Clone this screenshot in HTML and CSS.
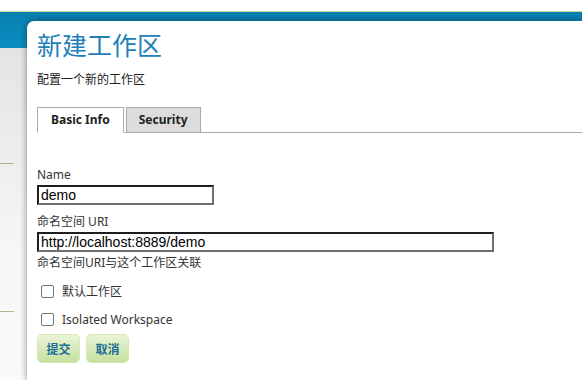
FILE: index.html
```html
<!DOCTYPE html>
<html lang="zh">
<head>
    <meta charset="UTF-8">
    <title>新建工作区</title>
    <link rel="stylesheet" href="styles.css">
</head>
<body>
    <div class="topbar"></div>
    <div class="header"></div>
    <div class="layout">
        <div class="sidebar">
            <div class="side-item"></div>
            <div class="side-item"></div>
        </div>
        <div class="page">
            <h1>新建工作区</h1>
            <p class="subtitle">配置一个新的工作区</p>

            <div class="tabs">
                <div class="tab active">Basic Info</div>
                <div class="tab">Security</div>
            </div>

            <div class="form">
                <div class="field">
                    <label for="name">Name</label>
                    <input type="text" id="name" class="short" value="demo">
                </div>
                <div class="field">
                    <label for="uri">命名空间 URI</label>
                    <input type="text" id="uri" class="long" value="http://localhost:8889/demo">
                    <div class="help">命名空间URI与这个工作区关联</div>
                </div>
                <div class="check">
                    <input type="checkbox" id="default">
                    <label for="default">默认工作区</label>
                </div>
                <div class="check">
                    <input type="checkbox" id="isolated">
                    <label for="isolated">Isolated Workspace</label>
                </div>
                <div class="buttons">
                    <button>提交</button>
                    <button>取消</button>
                </div>
            </div>
        </div>
    </div>
</body>
</html>
```

FILE: styles.css
```css
* {
    margin: 0;
    padding: 0;
    box-sizing: border-box;
}

body {
    height: 100vh;
    display: flex;
    flex-direction: column;
    font-family: 'Noto Sans', 'Noto Sans CJK SC', sans-serif;
    font-size: 12px;
    color: #333;
    background: #fff;
    overflow: hidden;
}

.topbar {
    height: 12px;
    flex-shrink: 0;
    background: #fff;
    border-bottom: 1px solid #c2dc94;
}

.header {
    height: 36px;
    flex-shrink: 0;
    background: linear-gradient(#0a7fb0, #0a8fc2);
}

.layout {
    display: flex;
    flex: 1;
    min-height: 0;
}

.sidebar {
    width: 27px;
    flex-shrink: 0;
    background: linear-gradient(#e4e4e4, #f6f6f6 60%, #fafafa);
    padding-top: 115px;
}

.side-item {
    width: 14px;
    height: 148px;
    border-top: 1px solid #abb592;
}

.side-item:last-child {
    height: 20px;
}

.page {
    flex: 1;
    margin-top: -27px;
    background: #fff;
    border-top-left-radius: 7px;
    box-shadow: 0 0 7px rgba(0, 0, 0, 0.45);
    padding: 8px 0 0 10px;
}

h1 {
    font-size: 25px;
    font-weight: normal;
    line-height: 32px;
    color: #2280b8;
}

.subtitle {
    margin-top: 11px;
    line-height: 16px;
    color: #222;
}

.tabs {
    display: flex;
    gap: 2px;
    margin-top: 19px;
    border-bottom: 1px solid #aaa;
}

.tab {
    height: 26px;
    margin-bottom: -1px;
    padding: 0 12px;
    line-height: 24px;
    font-weight: bold;
    color: #222;
    background: #dcdcdc;
    border: 1px solid #aaa;
}

.tab.active {
    background: #fff;
    border-bottom-color: #fff;
    padding: 0 13px;
}

.form {
    padding-top: 35px;
}

.field label {
    display: block;
    line-height: 14px;
    margin-bottom: 3px;
}

.field + .field {
    margin-top: 10px;
}

input[type="text"] {
    display: block;
    height: 20px;
    padding: 0 2px;
    font-family: 'Liberation Sans', sans-serif;
    font-size: 14px;
    color: #000;
    border: 2px solid;
    border-color: #1e1e1e #707070 #707070 #1e1e1e;
    outline: none;
}

.short {
    width: 177px;
}

.long {
    width: 457px;
}

.help {
    line-height: 16px;
    margin-top: 3px;
}

.check {
    display: flex;
    align-items: center;
    gap: 8px;
    height: 16px;
    padding-left: 4px;
    margin-top: 12px;
}

.check input {
    appearance: none;
    width: 13px;
    height: 13px;
    border: 1px solid #767676;
    border-radius: 2px;
    background: #fff;
}

.check label {
    color: #333;
}

.buttons {
    display: flex;
    gap: 6px;
    margin-top: 7px;
}

button {
    width: 43px;
    height: 29px;
    font-family: 'Noto Sans CJK SC', sans-serif;
    font-size: 12px;
    font-weight: bold;
    color: #1c6f96;
    background: linear-gradient(#eaf4d8, #c6e09c);
    border: 1px solid #d4e8b4;
    border-radius: 5px;
    cursor: pointer;
}
```
